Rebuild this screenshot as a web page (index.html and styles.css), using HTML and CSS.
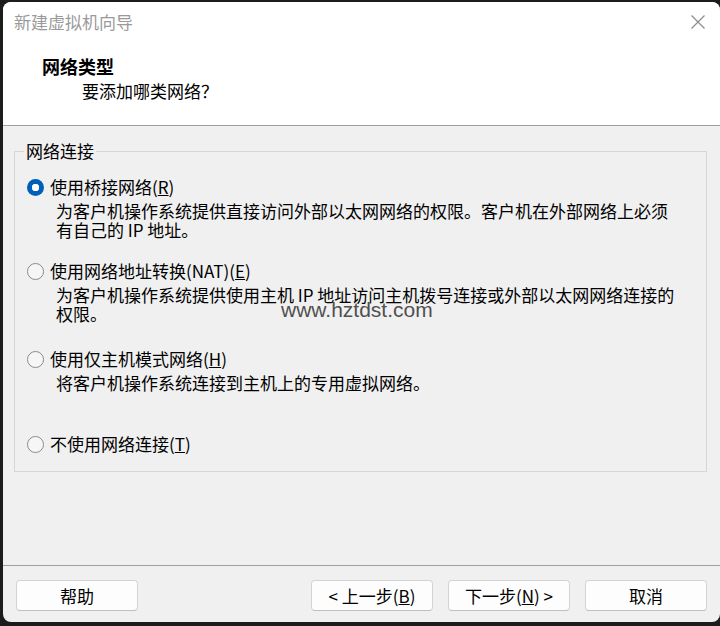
FILE: index.html
```html
<!DOCTYPE html>
<html lang="zh-CN">

<head>
    <meta charset="UTF-8">
    <title>新建虚拟机向导</title>
    <link rel="stylesheet" href="styles.css">
</head>

<body>
    <div class="window">
        <div class="header">
            <div class="titlebar">
                <span class="title">新建虚拟机向导</span>
                <svg class="close" width="16" height="16" viewBox="0 0 16 16">
                    <path d="M1.5 1.5 L14.5 14.5 M14.5 1.5 L1.5 14.5" stroke="#8c8c8c" stroke-width="1.2" fill="none" />
                </svg>
            </div>
            <div class="heading">网络类型</div>
            <div class="subheading">要添加哪类网络？</div>
        </div>

        <div class="main">
            <fieldset class="group">
                <legend>网络连接</legend>

                <div class="option">
                    <div class="radio-row"><span class="radio checked"></span>使用桥接网络(<u>R</u>)</div>
                    <div class="desc">为客户机操作系统提供直接访问外部以太网网络的权限。客户机在外部网络上必须<br>有自己的 IP 地址。</div>
                </div>

                <div class="option">
                    <div class="radio-row"><span class="radio"></span>使用网络地址转换(NAT)(<u>E</u>)</div>
                    <div class="desc">为客户机操作系统提供使用主机 IP 地址访问主机拨号连接或外部以太网网络连接的<br>权限。</div>
                </div>

                <div class="option host">
                    <div class="radio-row"><span class="radio"></span>使用仅主机模式网络(<u>H</u>)</div>
                    <div class="desc">将客户机操作系统连接到主机上的专用虚拟网络。</div>
                </div>

                <div class="option last">
                    <div class="radio-row"><span class="radio"></span>不使用网络连接(<u>T</u>)</div>
                </div>
            </fieldset>
            <div class="watermark">www.hztdst.com</div>
        </div>

        <div class="footer">
            <button class="btn">帮助</button>
            <div class="spacer"></div>
            <button class="btn">&lt; 上一步(<u>B</u>)</button>
            <button class="btn">下一步(<u>N</u>) &gt;</button>
            <button class="btn">取消</button>
        </div>
    </div>
</body>

</html>
```

FILE: styles.css
```css
* {
    padding: 0;
    margin: 0;
    box-sizing: border-box;
}

body {
    background-color: #1c1c1c;
    font-family: "Noto Sans CJK SC", "Liberation Sans", sans-serif;
    font-size: 17px;
    color: #000;
}

.window {
    width: 717px;
    height: 620px;
    margin: 2px 0 0 3px;
    border-radius: 8px;
    overflow: hidden;
    background-color: #f0f0f0;
    display: flex;
    flex-direction: column;
}

.header {
    background-color: #fff;
    border-bottom: 1px solid #a0a0a0;
    height: 124px;
}

.titlebar {
    height: 40px;
    display: flex;
    align-items: center;
    justify-content: space-between;
    padding: 0 14px 0 11px;
}

.title {
    color: #9a9a9a;
    line-height: 40px;
}

.heading {
    font-weight: bold;
    font-size: 18px;
    line-height: 22px;
    margin: 13px 0 0 39px;
}

.subheading {
    line-height: 24px;
    margin: 2px 0 0 79px;
}

.main {
    flex: 1;
    position: relative;
    padding: 15px 13px 0 11px;
}

.group {
    border: 1px solid #d6d6d6;
    padding: 0 12px 16px 12px;
}

.group legend {
    margin-left: -3px;
    padding: 0 2px;
    line-height: 20px;
}

.option {
    margin-top: 21px;
}

.option:first-of-type {
    margin-top: 15px;
}

.option.host {
    margin-top: 25px;
}

.option.last {
    margin-top: 41px;
}

.radio-row {
    display: flex;
    align-items: center;
    line-height: 22px;
}

.radio {
    width: 17px;
    height: 17px;
    border-radius: 50%;
    border: 1px solid #8a8a8a;
    background-color: #f6f6f6;
    margin-right: 6px;
    flex: none;
}

.radio.checked {
    border: none;
    background: radial-gradient(circle, #fff 0 3.5px, #005fb8 4px);
}

.desc {
    margin: 3px 0 0 29px;
    line-height: 19px;
}

.watermark {
    position: absolute;
    left: 278px;
    top: 172px;
    font-family: "Liberation Sans", sans-serif;
    font-size: 21px;
    color: #505050;
    line-height: 24px;
}

.footer {
    height: 57px;
    border-top: 1px solid #a0a0a0;
    padding: 14px 13px 11px 13px;
    display: flex;
    gap: 15px;
}

.spacer {
    flex: 1;
}

.btn {
    width: 122px;
    height: 31px;
    font: 17px "Noto Sans CJK SC", "Liberation Sans", sans-serif;
    background-color: #fdfdfd;
    border: 1px solid #d3d3d3;
    border-bottom-color: #bfbfbf;
    border-radius: 4px;
    color: #000;
}
```
